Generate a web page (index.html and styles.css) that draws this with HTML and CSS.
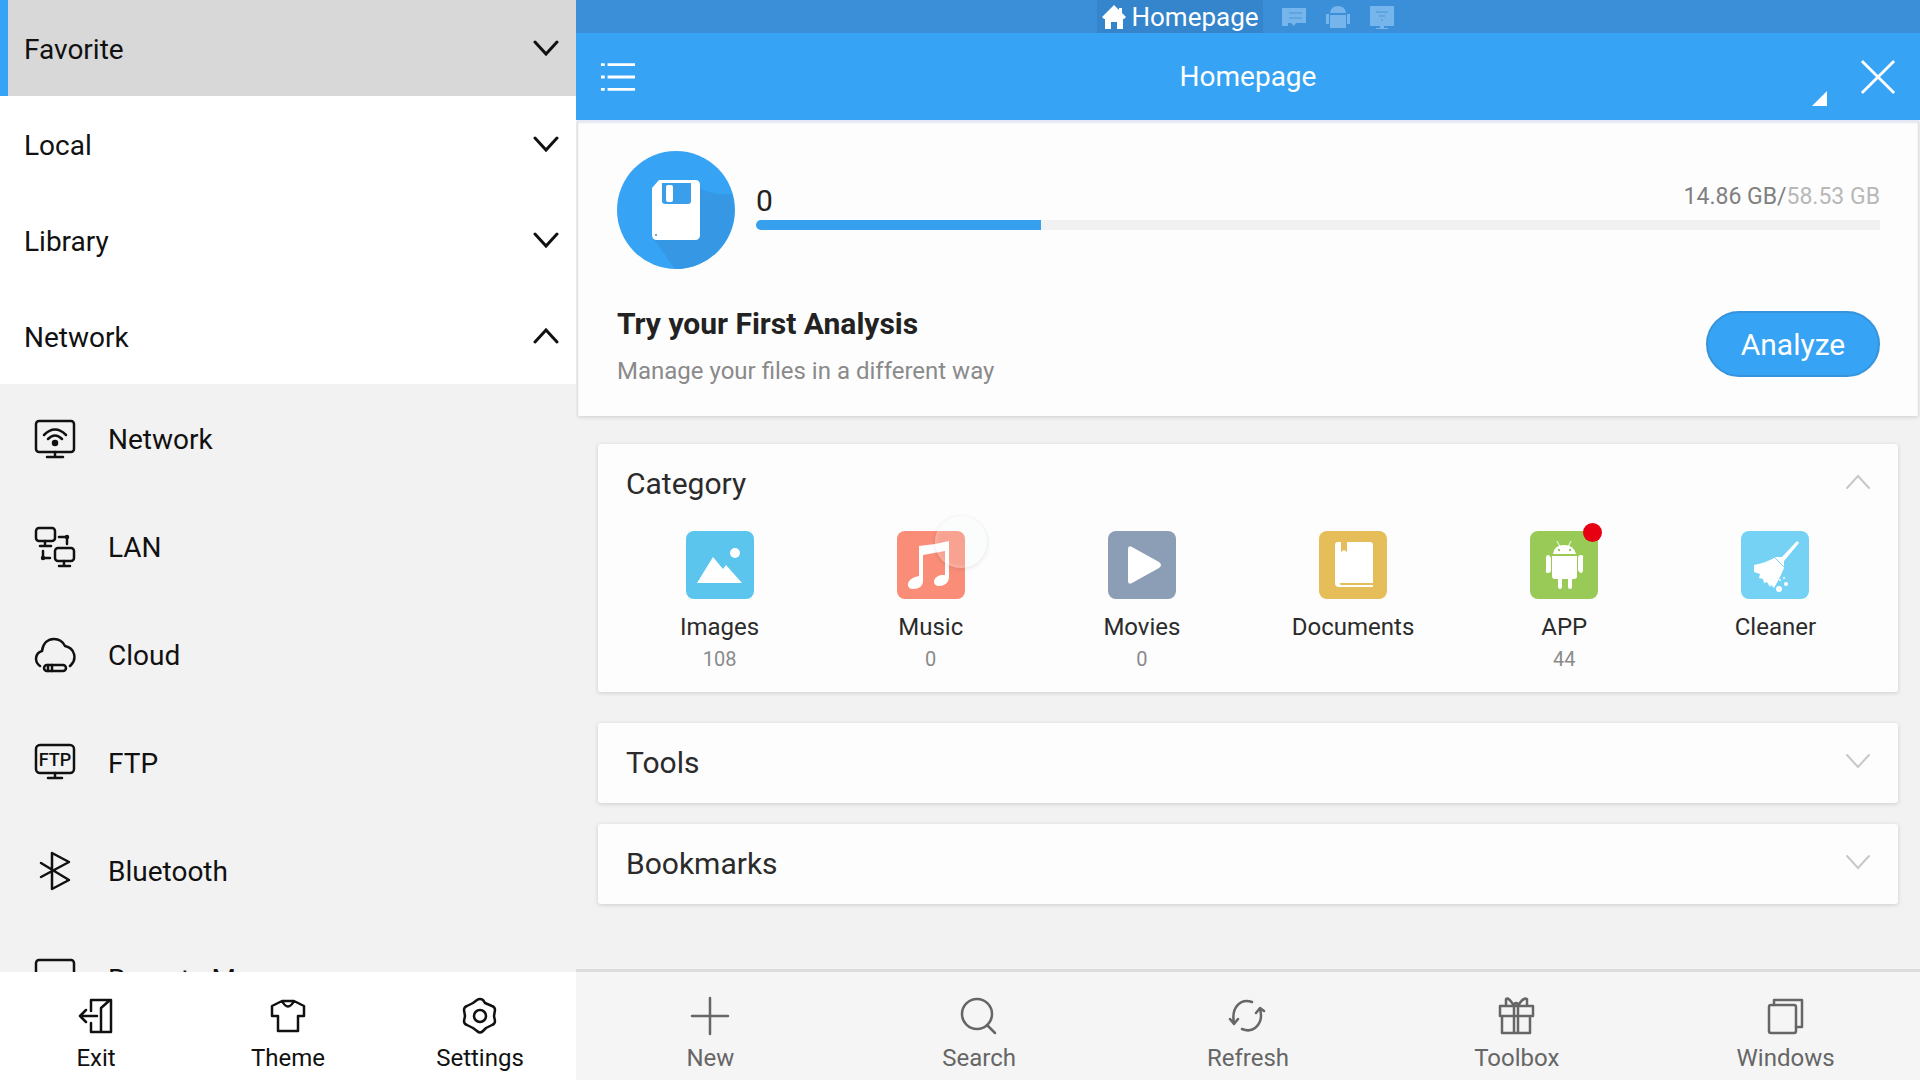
FILE: index.html
```html
<!DOCTYPE html>
<html lang="en">
<head>
<meta charset="utf-8">
<meta name="viewport" content="width=device-width, initial-scale=1">
<title>Homepage</title>
<link rel="stylesheet" href="styles.css">
</head>
<body>
<svg class="defs" aria-hidden="true">
  <symbol id="down" viewBox="0 0 26 18"><path d="M2 2l11 12L24 2"/></symbol>
  <symbol id="up" viewBox="0 0 26 18"><path d="M2 14L13 2l11 12"/></symbol>
</svg>
<div class="app">
  <aside class="sidebar">
    <nav class="sidebar-list" aria-label="Locations">
      <button class="group group-active">Favorite<svg class="chevron"><use href="#down"/></svg></button>
      <button class="group">Local<svg class="chevron"><use href="#down"/></svg></button>
      <button class="group">Library<svg class="chevron"><use href="#down"/></svg></button>
      <button class="group" aria-expanded="true">Network<svg class="chevron"><use href="#up"/></svg></button>
      <a class="place" href="#network">
        <svg class="icon" viewBox="0 0 42 42"><rect x="2" y="3" width="38" height="31" rx="3"/><path d="M21 34v5M13 39h16M10 17q11-11 22 0M14 21q7-7 14 0"/><circle class="solid" cx="21" cy="25" r="2"/></svg>
        Network</a>
      <a class="place" href="#lan">
        <svg class="icon" viewBox="0 0 42 42"><rect x="2" y="2" width="19" height="13" rx="3"/><path d="M11 15v5M6 20h11M25 11h8v7"/><rect x="21" y="22" width="19" height="13" rx="3"/><path d="M30 35v5M25 40h11M9 25v7h7"/><circle class="solid" cx="33" cy="11" r="1"/><circle class="solid" cx="9" cy="32" r="1"/></svg>
        LAN</a>
      <a class="place" href="#cloud">
        <svg class="icon" viewBox="0 0 42 42"><path d="M6 32C0 28 1 19 8 17C9 9 14 5 20 5c5 0 9 3 11 7c10 2 12 13 6 19l-1 1"/><rect x="10" y="31" width="22" height="6" rx="3"/><path d="M14 31v6M18 31v6"/></svg>
        Cloud</a>
      <a class="place" href="#ftp">
        <svg class="icon" viewBox="0 0 42 42"><rect x="2" y="3" width="38" height="28" rx="4"/><path d="M21 31v5M14 36h14"/><text class="icon-text" x="21" y="24">FTP</text></svg>
        FTP</a>
      <a class="place" href="#bluetooth">
        <svg class="icon" viewBox="0 0 42 42"><path d="M7 13l28 17l-17 9V3l17 9L7 27"/></svg>
        Bluetooth</a>
      <a class="place" href="#remote">
        <svg class="icon" viewBox="0 0 42 42"><rect x="2" y="2" width="38" height="31" rx="3"/><path d="M21 33v6M13 39h16"/></svg>
        Remote Manager</a>
    </nav>
    <div class="toolbar toolbar-side">
      <button class="tool"><svg class="icon" viewBox="0 0 42 42"><path d="M16 16V5h20v32H16V28M26 37V13l9-8M22 21H5M11 15l-6 6l6 6"/></svg>Exit</button>
      <button class="tool"><svg class="icon" viewBox="0 0 42 42"><path d="M15 6L5 11v10h6v15h20V21h6V11L27 6zM15 6q6 11 12 0"/></svg>Theme</button>
      <button class="tool"><svg class="icon" viewBox="0 0 42 42"><path d="M18 5q3-2 6 0l2 3l7 3q3 1 3 4l-1 6l1 5q0 3-3 4l-6 3l-3 3q-3 3-6 0l-4-3l-6-3q-3-1-3-4l1-5l-1-6q0-3 3-4l6-3z"/><circle cx="21" cy="21" r="6"/></svg>Settings</button>
    </div>
  </aside>

  <div class="pane">
    <div class="tabs">
      <a class="tab tab-active" href="#home"><svg class="home-icon" viewBox="0 0 26 26"><path d="M13 1L1 13l2 2h1v10h6v-7h6v7h6V15h1l2-2l-4-4V4h-3v2z"/></svg>Homepage</a>
      <a class="tab" href="#local" aria-label="Local"><svg class="tab-icon" viewBox="0 0 26 26"><path d="M1 4h24v15H15l-2 3l-3-3H7v3H1z"/><path class="tab-cut" d="M8 9h13M8 14h13"/></svg></a>
      <a class="tab" href="#apps" aria-label="Apps"><svg class="tab-icon" viewBox="0 0 26 26"><path d="M5 9q1-7 8-7t8 7zM5 11h16v13H5zM1 10h3v10H1zM22 10h3v10h-3z"/></svg></a>
      <a class="tab" href="#net" aria-label="Network"><svg class="tab-icon" viewBox="0 0 26 26"><path d="M1 2h24v20H15v2h4v1H7v-1h4v-2H1z"/><path class="tab-cut" d="M7 8h12M10 12h6M13 15v2"/></svg></a>
    </div>
    <header class="header">
      <button class="header-button" aria-label="Menu"><svg class="header-icon" viewBox="0 0 38 38"><path d="M1 6h4M8 6h29M1 19h4M8 19h29M1 32h4M8 32h29"/></svg></button>
      <h1 class="title">Homepage</h1>
      <div class="header-end">
        <svg class="corner" viewBox="0 0 16 16"><path d="M15 0v15H0z"/></svg>
        <button class="header-button" aria-label="Close"><svg class="header-icon" viewBox="0 0 38 38"><path d="M2 2l34 34M36 2L2 36"/></svg></button>
      </div>
    </header>

    <main class="content">
      <section class="storage">
        <div class="storage-row">
          <svg class="disk" viewBox="0 0 118 118">
            <circle cx="59" cy="59" r="59" fill="#37a3f4"/>
            <path d="M83 37q14 8 32 6a59 59 0 0 1-57 75q-10-14-22-31z" fill="#3698e4"/>
            <path d="M42 29h36q5 0 5 5v50q0 5-5 5H40q-5 0-5-5V37z" fill="#fff"/>
            <path d="M45 32h29v18q0 3-3 3H48q-3 0-3-3z" fill="#3b9eea"/>
            <rect x="49" y="34" width="7" height="17" rx="2" fill="#fff"/>
            <circle cx="39" cy="84" r="1" fill="#478bc4"/>
          </svg>
          <div class="usage">
            <div class="usage-text"><label class="usage-count" for="space">0</label><span class="usage-size">14.86 GB/<span class="usage-total">58.53 GB</span></span></div>
            <progress class="meter" id="space" value="14.86" max="58.53"></progress>
          </div>
        </div>
        <div class="analysis">
          <div>
            <h2 class="analysis-title">Try your First Analysis</h2>
            <p class="analysis-note">Manage your files in a different way</p>
          </div>
          <button class="analyze">Analyze</button>
        </div>
      </section>

      <div class="cards">
        <section class="card card-open">
          <button class="card-head" aria-expanded="true">Category<svg class="chevron chevron-light"><use href="#up"/></svg></button>
          <div class="categories">
            <a class="category" href="#images"><svg class="tile" viewBox="0 0 68 68"><rect width="68" height="68" rx="8" fill="#5bc5ee"/><path d="M11 52L27 26l10 12l3-4l16 18z"/><circle cx="49" cy="22" r="5"/></svg>Images<span class="count">108</span></a>
            <a class="category" href="#music">
              <span class="tile-wrap"><svg class="tile" viewBox="0 0 68 68"><rect width="68" height="68" rx="8" fill="#f98d78"/><path d="M22 15q15-1 30-5v36c0 6-5 9-10 9c-7 0-7-10 3-11l3 0V20l-22 4v26c0 5-4 8-10 8c-7 0-7-9 2-12l4-1z"/></svg><span class="touch"></span></span>Music<span class="count">0</span></a>
            <a class="category" href="#movies"><svg class="tile" viewBox="0 0 68 68"><rect width="68" height="68" rx="8" fill="#8c9db6"/><path d="M20 18q0-4 4-2l27 15q4 3 0 6L24 52q-4 2-4-2z"/></svg>Movies<span class="count">0</span></a>
            <a class="category" href="#documents"><svg class="tile" viewBox="0 0 68 68"><rect width="68" height="68" rx="8" fill="#e5bd59"/><path d="M19 11q-3 0-3 3v38q0 4 4 4h34v-2H22q-3-2 0-2h32V14q0-3-3-3H28v10l-3-2l-3 2V11z"/></svg>Documents</a>
            <a class="category" href="#apps-list">
              <span class="tile-wrap"><svg class="tile" viewBox="0 0 68 68"><rect width="68" height="68" rx="8" fill="#99ca57"/><path d="M23 23q1-9 11-9t12 9zM22 25h25v20q0 3-3 3h-2v8q0 2-2 2t-2-2v-8h-6v8q0 2-2 2t-2-2v-8h-3q-3 0-3-3zM16 27q0-3 2-3t3 3v12q0 3-3 3t-2-3zM48 27q0-3 3-3t2 3v12q0 3-2 3t-3-3z"/><path d="M27 10l3 6M41 10l-3 6" stroke="#fff"/><path d="M28 19h2M39 19h2" stroke="#99ca57" stroke-width="2"/></svg><span class="badge"></span></span>APP<span class="count">44</span></a>
            <a class="category" href="#cleaner"><svg class="tile" viewBox="0 0 68 68"><rect width="68" height="68" rx="8" fill="#76d2f5"/><path d="M56 10l2 2l-15 18l0 7q-3 8-10 20l-3-3l-1 2l-3-5l-3 1l-1-4l-4-1l1-4l-6-2v-7q14-3 22-8l6 0z"/><path d="M34 27l9 9" stroke="#76d2f5"/><circle cx="38" cy="58" r="3"/><circle cx="45" cy="53" r="2"/><circle cx="39" cy="49" r="1"/><circle cx="43" cy="47" r="1"/></svg>Cleaner</a>
          </div>
        </section>
        <section class="card"><button class="card-head">Tools<svg class="chevron chevron-light"><use href="#down"/></svg></button></section>
        <section class="card"><button class="card-head">Bookmarks<svg class="chevron chevron-light"><use href="#down"/></svg></button></section>
      </div>
    </main>

    <div class="toolbar toolbar-main">
      <button class="tool"><svg class="icon" viewBox="0 0 42 42"><path d="M21 3v36M3 21h36"/></svg>New</button>
      <button class="tool"><svg class="icon" viewBox="0 0 42 42"><circle cx="19" cy="19" r="15"/><path d="M29 30l8 8"/></svg>Search</button>
      <button class="tool"><svg class="icon" viewBox="0 0 42 42"><path d="M25 7C13 3 4 13 7 28M3 24l4 5l4-5M15 34c12 5 22-6 18-20M29 18l4-5l4 3"/></svg>Refresh</button>
      <button class="tool"><svg class="icon" viewBox="0 0 42 42"><path d="M4 11h33v10H4zM6 21h28v17H6zM18 11v27M22 11v27M18 11H10V4q3-2 8 7q0-3 2-3t2 3q5-9 9-7v7h-9"/></svg>Toolbox</button>
      <button class="tool"><svg class="icon" viewBox="0 0 42 42"><rect x="4" y="10" width="27" height="28" rx="2"/><path d="M9 10V5h28v27h-6"/></svg>Windows</button>
    </div>
  </div>
</div>
</body>
</html>
```
FILE: styles.css
```css
* { box-sizing: border-box; }

body {
  margin: 0;
  font-family: Roboto, "Liberation Sans", sans-serif;
  font-size: 24px;
  color: #111;
  background: #f2f2f2;
}

button {
  font: inherit;
  color: inherit;
  background: none;
  border: 0;
  padding: 0;
  cursor: pointer;
}

a { color: inherit; text-decoration: none; }
h1, h2, p { margin: 0; font-weight: 400; }
svg { display: block; flex: none; }

.defs { position: absolute; width: 0; height: 0; }

.app {
  display: grid;
  grid-template-columns: 30% 1fr;
  height: 100vh;
}

.sidebar, .pane {
  display: flex;
  flex-direction: column;
  min-width: 0;
  min-height: 0;
}

/* Sidebar */
.sidebar-list {
  flex: 1;
  min-height: 0;
  display: flex;
  flex-direction: column;
  overflow: hidden;
  font-size: 28px;
}

.group {
  flex: none;
  display: flex;
  align-items: center;
  justify-content: space-between;
  height: 96px;
  padding: 2px 17px 0 24px;
  background: #fff;
}

.group-active {
  background: #d8d8d8;
  box-shadow: inset 8px 0 #37a3f4;
}

.place {
  flex: none;
  display: flex;
  align-items: center;
  gap: 32px;
  height: 108px;
  padding: 2px 0 0 34px;
}

.chevron {
  width: 26px;
  height: 18px;
  fill: none;
  stroke: #111;
  stroke-width: 3;
  stroke-linecap: round;
}

.chevron-light { stroke: #c8c8c8; stroke-width: 2; }

.icon {
  width: 42px;
  height: 42px;
  fill: none;
  stroke: currentColor;
  stroke-width: 2.5;
  stroke-linejoin: round;
  stroke-linecap: round;
}

.solid { fill: currentColor; }

.icon-text {
  fill: currentColor;
  stroke: none;
  font-size: 18px;
  font-weight: 500;
  text-anchor: middle;
}

/* Bottom toolbars */
.toolbar {
  flex: none;
  display: grid;
  grid-auto-flow: column;
  grid-auto-columns: 1fr;
}

.toolbar-side { background: #fff; }

.toolbar-main {
  background: #f5f5f5;
  border-top: 3px solid #dcdcdc;
  color: #666;
}

.tool {
  display: flex;
  flex-direction: column;
  align-items: center;
  gap: 7px;
  height: 108px;
  padding-top: 23px;
  line-height: 28px;
}

/* Top bars */
.tabs {
  flex: none;
  display: flex;
  justify-content: center;
  gap: 18px;
  height: 33px;
  padding-right: 4px;
  background: #3a8fd8;
}

.tab {
  display: flex;
  align-items: center;
  gap: 4px;
  font-size: 26px;
  color: #fff;
}

.tab-active { padding: 0 4px; background: #3485cc; }
.home-icon { width: 26px; height: 26px; fill: #fff; }
.tab-icon { width: 26px; height: 26px; fill: #75b5ec; }
.tab-cut { fill: none; stroke: #5fa5e0; stroke-width: 2; }

.header {
  flex: none;
  display: grid;
  grid-template-columns: 1fr auto 1fr;
  align-items: center;
  height: 87px;
  padding: 0 24px;
  color: #fff;
  background: #37a3f4;
}

.title { font-size: 28px; }
.header-button { justify-self: start; }

.header-icon {
  width: 36px;
  height: 36px;
  fill: none;
  stroke: #fff;
  stroke-width: 3;
}

.header-end {
  justify-self: end;
  display: flex;
  align-items: flex-end;
  gap: 32px;
}

.corner { width: 16px; height: 16px; fill: #fff; margin-bottom: -12px; }

/* Storage summary */
.content { flex: 1; min-height: 0; overflow: hidden; }

.storage {
  margin: 0 2px;
  padding: 31px 38px 31px 39px;
  background: #fdfdfd;
  box-shadow: 0 1px 4px #ccc, inset 0 3px 2px #e4e8f4;
}

.storage-row { display: flex; gap: 21px; }
.disk { width: 118px; height: 118px; }
.usage { flex: 1; padding-top: 30px; }

.usage-text {
  display: flex;
  align-items: center;
  justify-content: space-between;
  height: 39px;
}

.usage-count { font-size: 30px; color: #222; }
.usage-size { padding-bottom: 8px; font-size: 23px; color: #808080; }
.usage-total { color: #b8b8b8; }

.meter {
  display: block;
  appearance: none;
  width: 100%;
  height: 10px;
  border: 0;
  border-radius: 5px 0 0 5px;
  overflow: hidden;
}

.meter::-webkit-progress-bar { background: #f1f1f1; }
.meter::-webkit-progress-value { background: #37a0ee; }

.analysis {
  display: flex;
  align-items: flex-start;
  justify-content: space-between;
  margin-top: 36px;
}

.analysis-title { font-size: 30px; font-weight: 700; line-height: 38px; color: #222; }
.analysis-note { margin-top: 14px; line-height: 28px; color: #8a8a8a; }

.analyze {
  width: 174px;
  height: 66px;
  margin-top: 6px;
  border: 2px solid #3594dc;
  border-radius: 33px;
  font-size: 30px;
  color: #fff;
  background: #37a3f4;
}

/* Cards */
.cards {
  display: flex;
  flex-direction: column;
  gap: 21px;
  padding: 28px 22px;
}

.card {
  border-radius: 3px;
  background: #fdfdfd;
  box-shadow: 0 1px 4px #ccc;
}

.card-open { margin-bottom: 10px; padding-bottom: 17px; }

.card-head {
  display: flex;
  align-items: center;
  justify-content: space-between;
  width: 100%;
  height: 80px;
  padding: 0 27px 2px 28px;
  font-size: 30px;
  color: #2b2b2b;
}

.categories {
  display: grid;
  grid-template-columns: repeat(6, 1fr);
  padding: 7px 17px 0 16px;
}

.category {
  display: flex;
  flex-direction: column;
  align-items: center;
  min-height: 144px;
  line-height: 28px;
  color: #2b2b2b;
}

.tile { width: 68px; height: 68px; margin-bottom: 14px; fill: #fff; }
.tile-wrap { position: relative; }
.count { margin-top: 6px; font-size: 20px; line-height: 24px; color: #8a8a8a; }

.badge {
  position: absolute;
  top: -8px;
  right: -4px;
  width: 19px;
  height: 19px;
  border-radius: 50%;
  background: #e60012;
}

/* Touch pointer */
.touch {
  position: absolute;
  top: -15px;
  right: -22px;
  width: 52px;
  height: 52px;
  border-radius: 50%;
  background: rgba(246, 250, 251, 0.2);
  box-shadow: 0 1px 5px rgba(0, 0, 0, 0.1), inset 0 0 4px rgba(255, 255, 255, 0.4);
}
```
